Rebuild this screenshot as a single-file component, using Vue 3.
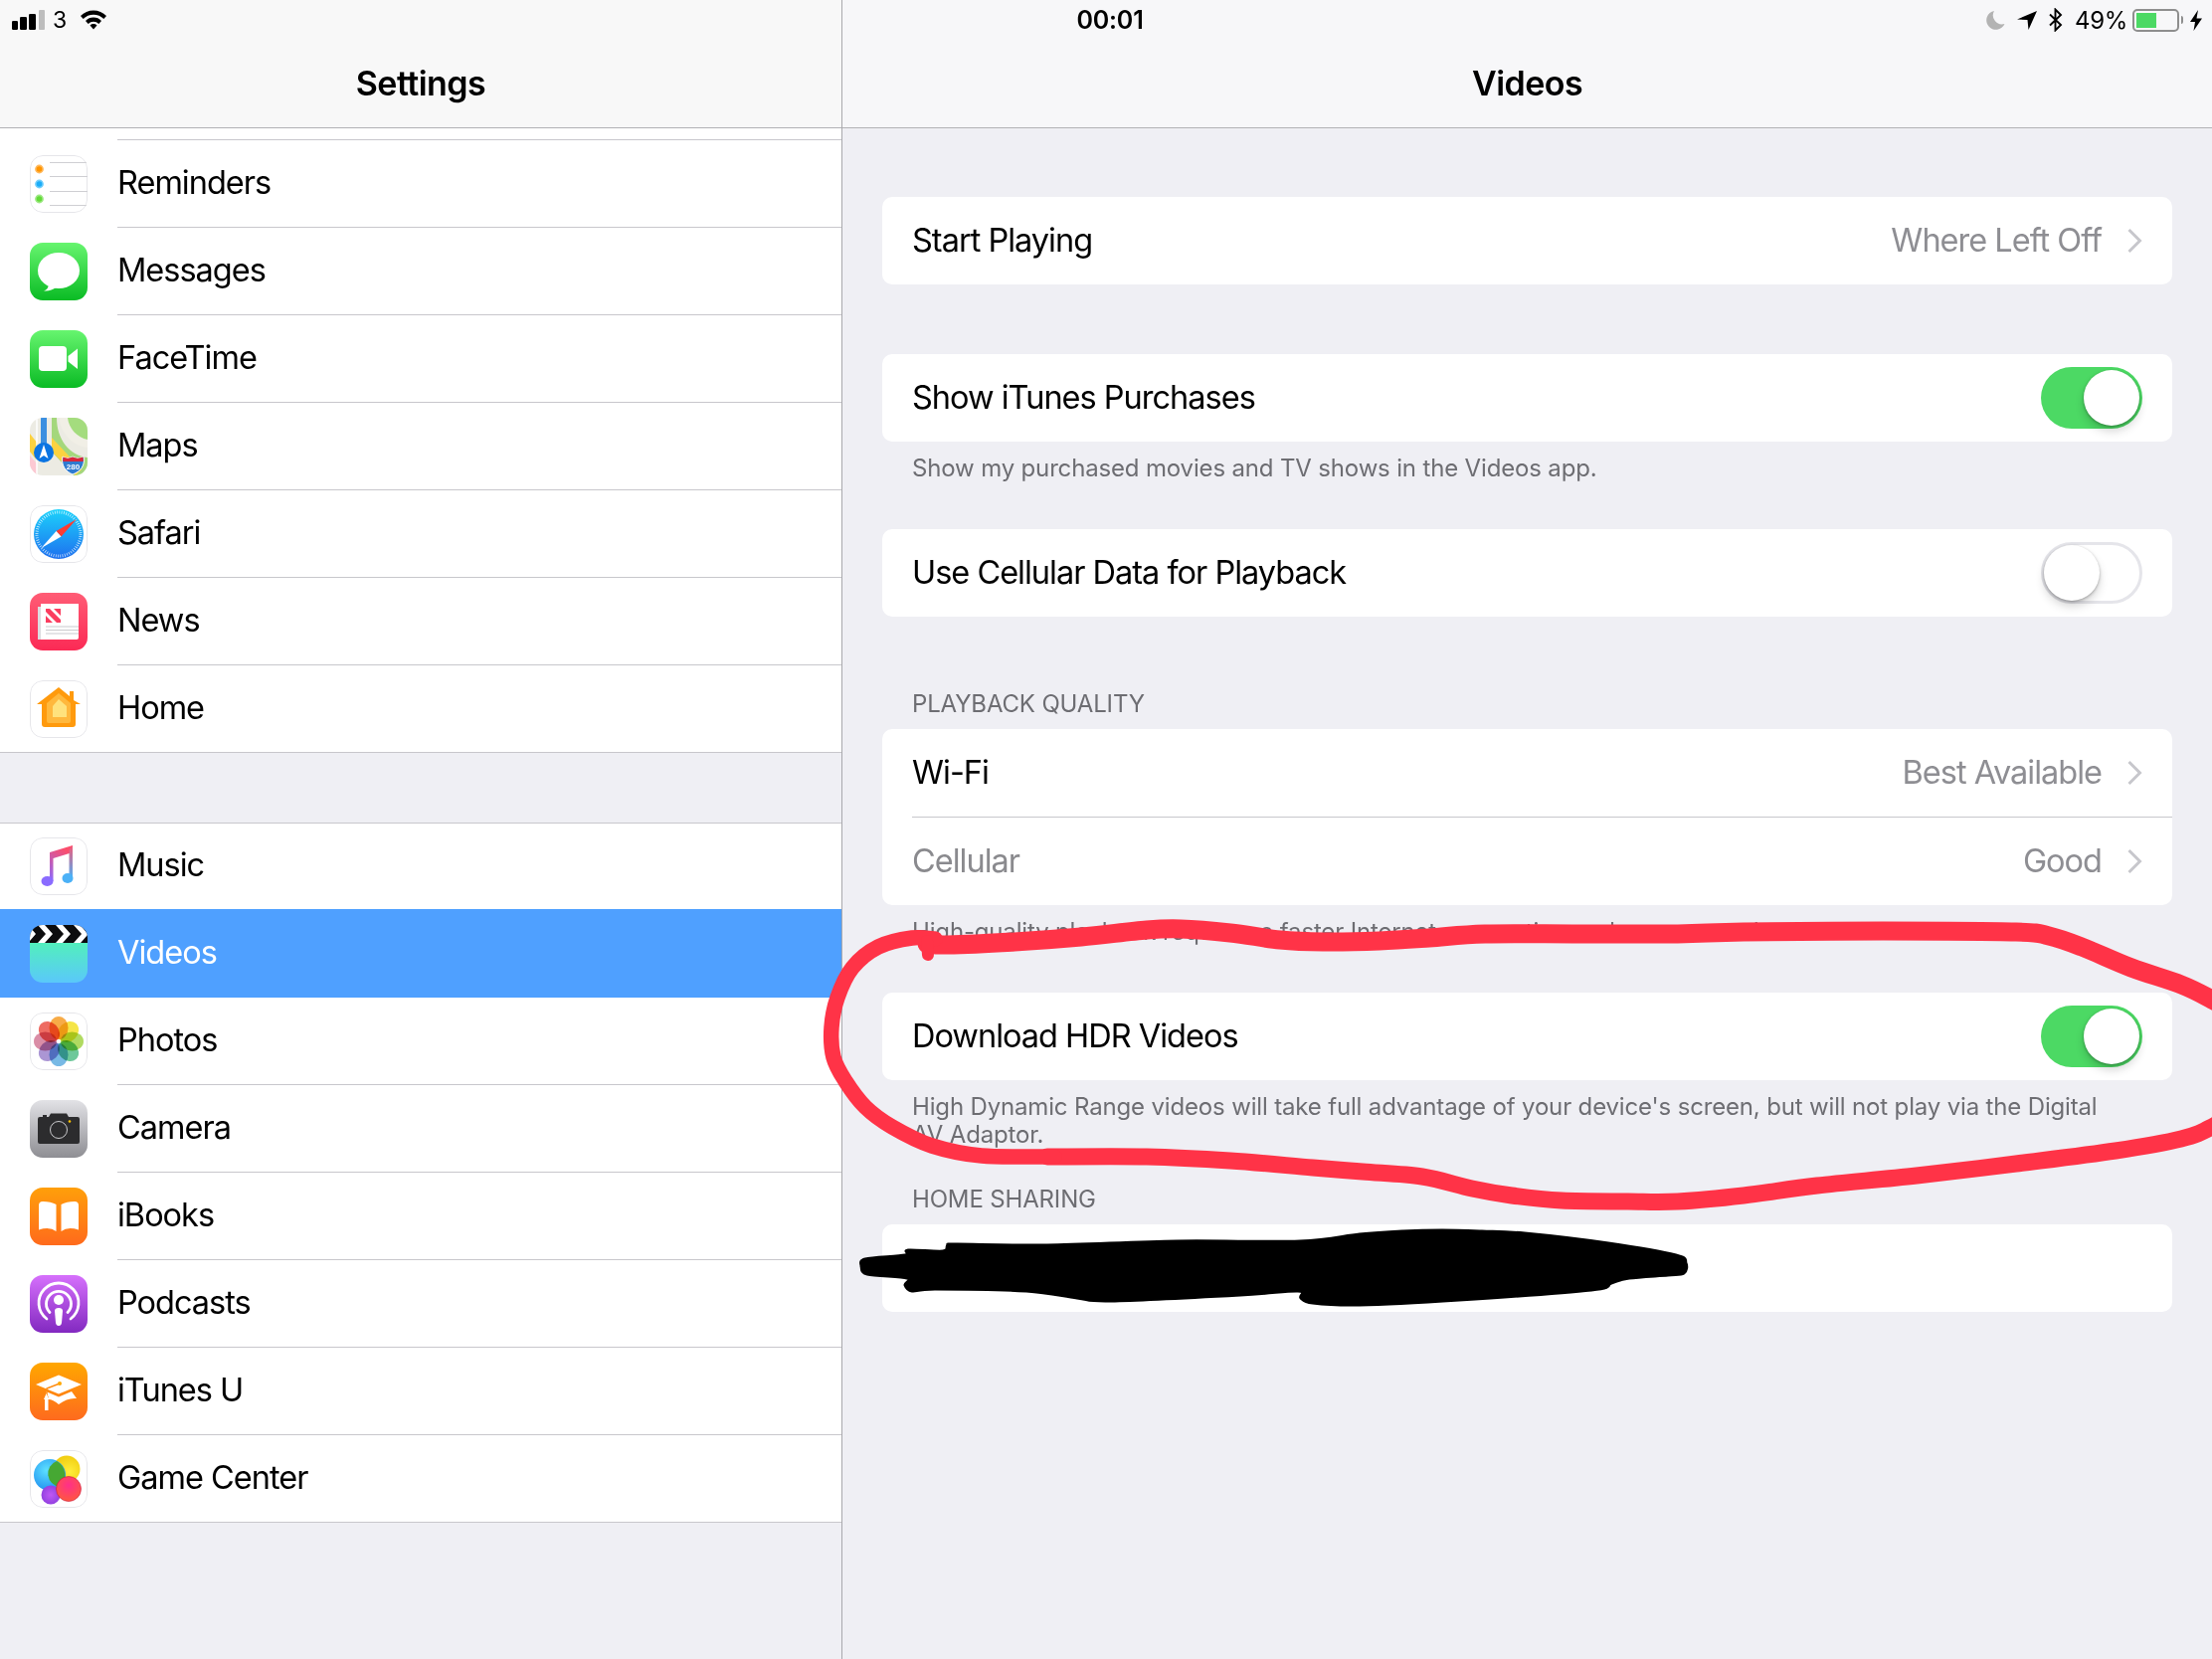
<script setup>
const groupOne = [
  { key: 'reminders', label: 'Reminders' },
  { key: 'messages', label: 'Messages' },
  { key: 'facetime', label: 'FaceTime' },
  { key: 'maps', label: 'Maps' },
  { key: 'safari', label: 'Safari' },
  { key: 'news', label: 'News' },
  { key: 'home', label: 'Home', last: true }
]
const groupTwo = [
  { key: 'music', label: 'Music', short: true },
  { key: 'videos', label: 'Videos', active: true },
  { key: 'photos', label: 'Photos' },
  { key: 'camera', label: 'Camera' },
  { key: 'ibooks', label: 'iBooks' },
  { key: 'podcasts', label: 'Podcasts' },
  { key: 'itunesu', label: 'iTunes U' },
  { key: 'gamecenter', label: 'Game Center', last: true }
]

const sections = [
  { gap: 'gap-first', rows: [{ label: 'Start Playing', value: 'Where Left Off' }] },
  {
    gap: 'gap-plain',
    rows: [{ label: 'Show iTunes Purchases', toggle: 'on' }],
    footer: 'Show my purchased movies and TV shows in the Videos app.'
  },
  { gap: 'gap-footer', rows: [{ label: 'Use Cellular Data for Playback', toggle: 'off' }] },
  {
    gap: 'gap-header',
    header: 'PLAYBACK QUALITY',
    rows: [
      { label: 'Wi-Fi', value: 'Best Available' },
      { label: 'Cellular', value: 'Good', muted: true }
    ],
    footer: 'High-quality playback requires a faster Internet connection and uses more data.'
  },
  {
    gap: 'gap-footer',
    rows: [{ label: 'Download HDR Videos', toggle: 'on' }],
    footer: "High Dynamic Range videos will take full advantage of your device's screen, but will not play via the Digital AV Adaptor."
  },
  { gap: 'gap-tight', header: 'HOME SHARING', rows: [{ label: '' }] }
]

function smooth(pts) {
  let d = `M${pts[0][0]} ${pts[0][1]}`
  for (let i = 0; i < pts.length - 1; i++) {
    const p0 = pts[i - 1] || pts[i]
    const p1 = pts[i]
    const p2 = pts[i + 1]
    const p3 = pts[i + 2] || p2
    const c1x = p1[0] + (p2[0] - p0[0]) / 6
    const c1y = p1[1] + (p2[1] - p0[1]) / 6
    const c2x = p2[0] - (p3[0] - p1[0]) / 6
    const c2y = p2[1] - (p3[1] - p1[1]) / 6
    d += ` C${c1x.toFixed(1)} ${c1y.toFixed(1)} ${c2x.toFixed(1)} ${c2y.toFixed(1)} ${p2[0]} ${p2[1]}`
  }
  return d
}

const redTop = smooth([
  [932, 949], [953, 950], [1020, 947], [1087, 942], [1153, 935], [1187, 934], [1237, 938], [1287, 945],
  [1330, 947], [1387, 946], [1437, 943], [1493, 939], [1587, 939], [1687, 939], [1753, 937], [1893, 936],
  [2027, 937], [2060, 941], [2093, 952], [2143, 973], [2193, 990], [2224, 1005], [2250, 1020]
])
const redBottom = smooth([
  [2250, 1115], [2224, 1133], [2193, 1145], [2127, 1157], [2027, 1170], [1927, 1182], [1827, 1192],
  [1753, 1202], [1687, 1208], [1637, 1208], [1570, 1207], [1520, 1202], [1480, 1195], [1430, 1183],
  [1370, 1178], [1320, 1174], [1237, 1167], [1153, 1163], [1053, 1163]
])
const redLeft = smooth([
  [1060, 1163], [987, 1162], [937, 1152], [897, 1133], [870, 1113], [850, 1087], [838, 1063], [836, 1033],
  [842, 1003], [857, 973], [883, 952], [917, 943], [940, 944]
])
const redHook = 'M933 960 L932 946'
const blobPts = [
  [866, 1273], [870, 1266], [910, 1262], [913, 1257], [948, 1258], [953, 1252], [963, 1251], [1053, 1252],
  [1183, 1248], [1307, 1248], [1367, 1241], [1410, 1238], [1450, 1237], [1490, 1238], [1533, 1240],
  [1617, 1250], [1685, 1262], [1695, 1270], [1693, 1280], [1677, 1282], [1638, 1285], [1620, 1290],
  [1600, 1297], [1467, 1307], [1367, 1312], [1320, 1310], [1308, 1305], [1305, 1298], [1247, 1302], [1117, 1308],
  [1083, 1305], [1032, 1298], [940, 1296], [917, 1298], [910, 1292], [912, 1285], [872, 1281], [866, 1273]
]
const blob = smooth(blobPts) + ' Z'

const petals = [
  { a: 0, c: '#f7a233' }, { a: 45, c: '#f4e233' }, { a: 90, c: '#a8d650' }, { a: 135, c: '#5dc28f' },
  { a: 180, c: '#68b1e2' }, { a: 225, c: '#a28bd0' }, { a: 270, c: '#d6819c' }, { a: 315, c: '#ec5c52' }
]
</script>

<template>
  <div class="screen">
    <aside class="master">
      <header class="nav nav-left"><h1 class="title">Settings</h1></header>
      <div class="list">
        <div class="top-rule"></div>
        <template v-for="(group, gi) in [groupOne, groupTwo]" :key="gi">
          <div v-if="gi === 1" class="list-gap"></div>
          <div
            v-for="row in group"
            :key="row.key"
            class="row"
            :class="{ 'row-last': row.last, 'row-active': row.active, 'row-short': row.short }"
          >
            <svg class="icon" viewBox="0 0 58 58">
              <template v-if="row.key === 'reminders'">
                <rect x=".5" y=".5" width="57" height="57" rx="12.5" fill="#fff" stroke="#e6e6ea" />
                <path d="M20 7.5H58M20 21.5H58M20 36.5H58M20 50.5H58" stroke="#cfcfd3" stroke-width="1.2" />
                <circle cx="9.5" cy="14" r="3.6" fill="#ff9500" stroke="#ffb95c" stroke-width="1.6" />
                <circle cx="9.5" cy="29" r="3.6" fill="#1badf8" stroke="#6fcdfb" stroke-width="1.6" />
                <circle cx="9.5" cy="44" r="3.6" fill="#63da38" stroke="#9de883" stroke-width="1.6" />
              </template>
              <template v-else-if="row.key === 'messages'">
                <defs><linearGradient id="gMsg" x1="0" y1="0" x2="0" y2="1"><stop offset="0" stop-color="#67f56f" /><stop offset="1" stop-color="#0abb24" /></linearGradient></defs>
                <rect width="58" height="58" fill="url(#gMsg)" />
                <ellipse cx="29" cy="28" rx="21" ry="18" fill="#fff" />
                <path d="M19 41 C19 45 17 47.500 14 48.500 C19 49 23 47.500 26 45 Z" fill="#fff" />
              </template>
              <template v-else-if="row.key === 'facetime'">
                <defs><linearGradient id="gFt" x1="0" y1="0" x2="0" y2="1"><stop offset="0" stop-color="#67f56f" /><stop offset="1" stop-color="#0abb24" /></linearGradient></defs>
                <rect width="58" height="58" fill="url(#gFt)" />
                <rect x="9" y="16" width="28" height="25" rx="4" fill="#fff" />
                <path d="M38.500 26 L48 18.500 V39 L38.500 31.500 Z" fill="#fff" />
              </template>
              <template v-else-if="row.key === 'maps'">
                <rect width="58" height="58" fill="#ecebe3" />
                <path d="M30 0 H58 V30 C46 30 30 16 30 0 Z" fill="#f1efe6" />
                <path d="M38 0 H58 V22 C48 20 39 11 38 0 Z" fill="#a4dc7e" />
                <path d="M22 0 H27 C27 22 40 38 58 40 V58 H44 L22 34 Z" fill="#a4d77c" />
                <path d="M22 20 L52 52 L46 58 L22 34 Z" fill="#fbd240" />
                <path d="M0 16 L8 26 V44 L0 34 Z" fill="#fbd240" />
                <path d="M0 38 L7 46 V58 H0 Z" fill="#fcc9d3" />
                <path d="M7 0 V58" stroke="#fff" stroke-width="1.500" />
                <path d="M14 0 V30" stroke="#3b8fe0" stroke-width="6" />
                <circle cx="14" cy="35" r="10" fill="#0a74e2" />
                <path d="M14 27 L18.500 41 L14 38 L9.500 41 Z" fill="#fff" />
                <path d="M33 39 C36 41 40 41 43 39 C46 41 50 41 54 39 C56 48 51 54 43 57 C36 54 31 48 33 39 Z" fill="#2f7bd0" stroke="#fff" stroke-width="1" />
                <path d="M33.500 39.500 C36 41 40 41 43 39.500 C46 41 50 41 53.500 39.500 L53.800 44 H33.200 Z" fill="#d9263a" />
                <text x="43.500" y="52" class="shield">280</text>
              </template>
              <template v-else-if="row.key === 'safari'">
                <defs><linearGradient id="gSaf" x1="0" y1="0" x2="0" y2="1"><stop offset="0" stop-color="#1cd2fb" /><stop offset="1" stop-color="#1e70ef" /></linearGradient></defs>
                <rect x=".5" y=".5" width="57" height="57" rx="12.500" fill="#fff" stroke="#e6e6ea" />
                <circle cx="29" cy="29" r="25" fill="url(#gSaf)" />
                <circle cx="29" cy="29" r="22" fill="none" stroke="#fff" stroke-opacity=".85" stroke-width="3" stroke-dasharray=".7 1.600" />
                <path d="M47 14 L26.500 26 L31.500 31.500 Z" fill="#ff3b30" />
                <path d="M11.500 43 L26.500 26 L31.500 31.500 Z" fill="#fff" />
              </template>
              <template v-else-if="row.key === 'news'">
                <defs><linearGradient id="gNews" x1="0" y1="0" x2="0" y2="1"><stop offset="0" stop-color="#ff5c75" /><stop offset="1" stop-color="#fb2a55" /></linearGradient></defs>
                <rect width="58" height="58" fill="url(#gNews)" />
                <rect x="8" y="14" width="4" height="33" fill="#dcdce0" />
                <path d="M11 11 H49 V45 Q49 47 47 47 H11 Z" fill="#fff" />
                <path d="M16 16 H20 L31 27 V30 H27 L16 19 Z M24 16 H31 V23 Z M16 23 L23 30 H16 Z" fill="#fb3d5f" />
                <path d="M16 34 H49 M16 37.500 H49 M16 41 H49" stroke="#c4c4c8" stroke-width=".9" />
              </template>
              <template v-else-if="row.key === 'home'">
                <rect x=".5" y=".5" width="57" height="57" rx="12.500" fill="#fff" stroke="#e6e6ea" />
                <path d="M29 7 L40 16 V11 H44 V20 L51 24 H46 V44 Q46 47 43 47 H15 Q12 47 12 44 V24 H7 Z" fill="#ff9a0d" />
                <path d="M29 13 L41 23 V41 Q41 43 39 43 H19 Q17 43 17 41 V23 Z" fill="#ffb83d" />
                <path d="M29 19 L37 26 V37 H23 V26 Z" fill="#ffe27d" />
              </template>
              <template v-else-if="row.key === 'music'">
                <defs>
                  <linearGradient id="gMusL" x1="0" y1="1" x2=".4" y2="0"><stop offset="0" stop-color="#8a6bff" /><stop offset="1" stop-color="#fb4d6c" /></linearGradient>
                  <linearGradient id="gMusR" x1="0" y1="0" x2="0" y2="1"><stop offset="0" stop-color="#f45a78" /><stop offset="1" stop-color="#4bb1f7" /></linearGradient>
                </defs>
                <rect x=".5" y=".5" width="57" height="57" rx="12.500" fill="#fff" stroke="#e6e6ea" />
                <path d="M20 15 L43 8 V15 L23.500 21 V44 H20 Z" fill="url(#gMusL)" />
                <path d="M39.500 13 L43 8 V41 H39.500 Z" fill="url(#gMusR)" />
                <ellipse cx="17.500" cy="44" rx="6" ry="5" fill="#8a6bff" />
                <ellipse cx="38" cy="41" rx="5.500" ry="5" fill="#4bb1f7" />
              </template>
              <template v-else-if="row.key === 'videos'">
                <defs><linearGradient id="gVid" x1="0" y1="0" x2="0" y2="1"><stop offset="0" stop-color="#52efbd" /><stop offset="1" stop-color="#5ac8fa" /></linearGradient></defs>
                <rect y="18" width="58" height="40" fill="url(#gVid)" />
                <rect width="58" height="18" fill="#0c0c0e" />
                <path d="M8 0 H15 L23 9 L15 18 H8 L16 9 Z M26 0 H33 L41 9 L33 18 H26 L34 9 Z M44 0 H51 L58 9 V10 L51 18 H44 L52 9 Z M0 2 L6 9 L0 16 Z" fill="#fff" />
              </template>
              <template v-else-if="row.key === 'photos'">
                <rect x=".5" y=".5" width="57" height="57" rx="12.500" fill="#fff" stroke="#e6e6ea" />
                <ellipse
                  v-for="p in petals"
                  :key="p.a"
                  class="petal"
                  cx="29"
                  cy="15.500"
                  rx="9.500"
                  ry="11.500"
                  :fill="p.c"
                  :transform="`rotate(${p.a} 29 29)`"
                />
              </template>
              <template v-else-if="row.key === 'camera'">
                <defs><linearGradient id="gCam" x1="0" y1="0" x2="0" y2="1"><stop offset="0" stop-color="#e2e2e6" /><stop offset="1" stop-color="#8e8e93" /></linearGradient></defs>
                <rect width="58" height="58" fill="url(#gCam)" />
                <path d="M10 17 H19 L21 13.500 H37 L39 17 H48 Q50 17 50 19 V42 Q50 44 48 44 H10 Q8 44 8 42 V19 Q8 17 10 17 Z" fill="#2c2c2e" />
                <rect x="13" y="15" width="4" height="2" fill="#2c2c2e" />
                <circle cx="29" cy="30" r="8.500" fill="none" stroke="#c9c9cc" stroke-width="1" />
                <circle cx="40" cy="21.500" r="1.300" fill="#ffc400" />
              </template>
              <template v-else-if="row.key === 'ibooks'">
                <defs><linearGradient id="gBook" x1="0" y1="0" x2="0" y2="1"><stop offset="0" stop-color="#ff9f0a" /><stop offset="1" stop-color="#ff6a1c" /></linearGradient></defs>
                <rect width="58" height="58" fill="url(#gBook)" />
                <path d="M9 18 Q9 14 13 14 Q21 14 26.500 17 V44 Q20 39 9 42.500 Z M49 18 Q49 14 45 14 Q37 14 31.500 17 V44 Q38 39 49 42.500 Z" fill="#fff" />
              </template>
              <template v-else-if="row.key === 'podcasts'">
                <defs><linearGradient id="gPod" x1="0" y1="0" x2="0" y2="1"><stop offset="0" stop-color="#d670fc" /><stop offset="1" stop-color="#8229c0" /></linearGradient></defs>
                <rect width="58" height="58" fill="url(#gPod)" />
                <path d="M17 44 A20 20 0 1 1 41 44" fill="none" stroke="#fff" stroke-width="2.800" stroke-linecap="round" />
                <path d="M20 37.500 A12.500 12.500 0 1 1 38 37.500" fill="none" stroke="#fff" stroke-width="2.800" stroke-linecap="round" />
                <circle cx="29" cy="25" r="5" fill="#fff" />
                <path d="M25 36 Q25 33 29 33 Q33 33 33 36 L32 48 Q31.500 51 29 51 Q26.500 51 26 48 Z" fill="#fff" />
              </template>
              <template v-else-if="row.key === 'itunesu'">
                <defs><linearGradient id="gItu" x1="0" y1="0" x2="0" y2="1"><stop offset="0" stop-color="#ffa700" /><stop offset="1" stop-color="#fe6a1e" /></linearGradient></defs>
                <rect width="58" height="58" fill="url(#gItu)" />
                <path d="M29 12.500 L52 22 L29 31.500 L6 22 Z" fill="#fff" />
                <path d="M16 29 L29 34.500 L42 29 L47 36 Q38 35 29 42 Q23 37 19 37 L18.500 34 Z" fill="#fff" />
                <path d="M30 21 L17 26 V33" fill="none" stroke="#fe8a10" stroke-width="1.400" />
                <circle cx="30" cy="21" r="2" fill="#ffa700" />
                <rect x="15" y="37" width="3.500" height="11" fill="#fff" />
                <path d="M16.500 31 L14 37 H19.500 Z" fill="#fff" />
              </template>
              <template v-else-if="row.key === 'gamecenter'">
                <defs>
                  <radialGradient id="gGcB" cx=".4" cy=".35" r=".7"><stop offset="0" stop-color="#5de0ff" /><stop offset="1" stop-color="#1e8df0" /></radialGradient>
                  <radialGradient id="gGcY" cx=".6" cy=".6" r=".7"><stop offset="0" stop-color="#ffee3c" /><stop offset="1" stop-color="#efc80a" /></radialGradient>
                  <radialGradient id="gGcP" cx=".5" cy=".35" r=".7"><stop offset="0" stop-color="#ff2f8a" /><stop offset="1" stop-color="#ff5a3a" /></radialGradient>
                  <radialGradient id="gGcV" cx=".5" cy=".5" r=".6"><stop offset="0" stop-color="#c058f5" /><stop offset="1" stop-color="#8a3cdc" /></radialGradient>
                </defs>
                <rect x=".5" y=".5" width="57" height="57" rx="12.500" fill="#fff" stroke="#e6e6ea" />
                <circle cx="37" cy="19" r="13.500" fill="url(#gGcY)" />
                <circle cx="20" cy="25" r="16" fill="url(#gGcB)" />
                <path d="M27 11 A16 16 0 0 1 30 37 A13.500 13.500 0 0 1 27 11 Z" fill="#46a833" />
                <circle cx="21" cy="45" r="9.500" fill="url(#gGcV)" />
                <circle cx="39" cy="39" r="12.500" fill="url(#gGcP)" stroke="#c8163e" stroke-width=".6" />
              </template>
            </svg>
            <div class="row-body"><span class="row-label">{{ row.label }}</span></div>
          </div>
        </template>
      </div>
    </aside>

    <main class="detail">
      <header class="nav nav-right"><h1 class="title">Videos</h1></header>
      <section v-for="(section, si) in sections" :key="si" class="section" :class="section.gap">
        <div v-if="section.header" class="caption-head">{{ section.header }}</div>
        <div class="group">
          <div v-for="(r, ri) in section.rows" :key="ri" class="cell">
            <span class="cell-label" :class="{ muted: r.muted }">{{ r.label }}</span>
            <template v-if="r.value">
              <span class="cell-value">{{ r.value }}</span>
              <svg class="chevron" viewBox="0 0 16 26"><path d="M2.500 2 L13.500 13 L2.500 24" fill="none" stroke="#c7c7cc" stroke-width="3" /></svg>
            </template>
            <div v-if="r.toggle" class="toggle" :class="`toggle-${r.toggle}`"><div class="knob"></div></div>
          </div>
        </div>
        <p v-if="section.footer" class="caption-foot">{{ section.footer }}</p>
      </section>
    </main>

    <div class="status">
      <div class="status-left">
        <svg class="signal" viewBox="0 0 34 20" width="34" height="20">
          <rect x="0" y="11" width="6" height="9" rx="1.200" fill="#000" />
          <rect x="8" y="7" width="7" height="13" rx="1.200" fill="#000" />
          <rect x="17" y="4" width="7" height="16" rx="1.200" fill="#000" />
          <rect x="27" y="0" width="6" height="20" rx="1" fill="#bdbdbd" />
        </svg>
        <span class="carrier">3</span>
        <svg class="wifi" viewBox="0 0 28 21" width="28" height="21">
          <path d="M1 7 A18 18 0 0 1 27 7 L24.300 10 A14.500 14.500 0 0 0 3.700 10 Z" fill="#000" />
          <path d="M6 12 A11 11 0 0 1 22 12 L19.300 15 A7.500 7.500 0 0 0 8.700 15 Z" fill="#000" />
          <path d="M10.500 16.500 A5 5 0 0 1 17.500 16.500 L14 20.500 Z" fill="#000" />
        </svg>
      </div>
      <div class="status-time">00:01</div>
      <div class="status-right">
        <svg viewBox="0 0 19 20" width="19" height="20"><path d="M8 1 A9.500 9.500 0 1 0 18.500 14 A9 9 0 0 1 8 1 Z" fill="#b3b3b3" /></svg>
        <svg class="s-loc" viewBox="0 0 20 20" width="20" height="20"><path d="M20 1 L0 9.500 L10.500 10 L11.500 20 Z" fill="#000" /></svg>
        <svg class="s-bt" viewBox="0 0 14 24" width="14" height="24"><path d="M1 6.500 L12 17 L6.500 22.500 V1.500 L12 7 L1 17.500" fill="none" stroke="#000" stroke-width="1.900" /></svg>
        <span class="percent">49%</span>
        <div class="battery"><div class="battery-fill"></div></div>
        <div class="battery-nub"></div>
        <svg class="s-bolt" viewBox="0 0 12 21" width="12" height="21"><path d="M8 0 L0 12 H5 L3.500 21 L12 8.500 H6.500 Z" fill="#000" /></svg>
      </div>
    </div>

    <svg class="ink" viewBox="0 0 2224 1668" width="2224" height="1668">
      <path :d="blob" fill="#000" stroke="#000" stroke-width="3" stroke-linejoin="round" />
      <path :d="redTop" class="red" stroke-width="19" />
      <path :d="redBottom" class="red" stroke-width="17" />
      <path :d="redLeft" class="red" stroke-width="15.500" />
      <path :d="redHook" class="red" stroke-width="12" />
    </svg>
  </div>
</template>

<style scoped>
.screen {
  position: relative;
  width: 2224px;
  height: 1668px;
  overflow: hidden;
  display: grid;
  grid-template-columns: 846px 1fr;
  background: #efeff4;
  font-family: Inter, "Liberation Sans", sans-serif;
  color: #000;
}
.master {
  border-right: 1px solid #a9a9ad;
  box-sizing: content-box;
  width: 846px;
  display: flex;
  flex-direction: column;
}
.detail {
  margin-left: 1px;
  display: flex;
  flex-direction: column;
}
.nav {
  height: 128px;
  flex: none;
  border-bottom: 1px solid #b2b2b5;
  display: flex;
  align-items: flex-end;
  justify-content: center;
}
.nav-left { background: #f8f8f8; }
.nav-right { background: #f7f7f9; }
.title {
  margin: 0 0 24px;
  font-size: 34px;
  line-height: 40px;
  font-weight: 600;
  letter-spacing: -0.55px;
}
.list { display: flex; flex-direction: column; }
.top-rule {
  height: 12px;
  background: #fff;
  box-sizing: border-box;
  padding-left: 118px;
  background-image: linear-gradient(#c8c7cc, #c8c7cc);
  background-repeat: no-repeat;
  background-size: calc(100% - 118px) 1px;
  background-position: 118px 11px;
}
.list-gap {
  height: 70px;
  background: #efeff4;
  border-bottom: 1px solid #c8c7cc;
}
.row {
  height: 88px;
  box-sizing: border-box;
  background: #fff;
  display: flex;
  align-items: center;
  padding-left: 30px;
}
.row-short { height: 86px; }
.row-active { height: 89px; background: #4fa0ff; color: #fff; }
.row-last { border-bottom: 1px solid #c8c7cc; }
.icon {
  width: 58px;
  height: 58px;
  flex: none;
  border-radius: 13px;
  overflow: hidden;
}
.row-body {
  flex: 1;
  align-self: stretch;
  margin-left: 30px;
  padding-bottom: 3px;
  display: flex;
  align-items: center;
  border-bottom: 1px solid #c8c7cc;
  box-sizing: border-box;
}
.row-last .row-body,
.row-short .row-body,
.row-active .row-body { border-bottom: 0; }
.row-label { font-size: 32.5px; letter-spacing: -1px; }
.shield {
  font-family: "Liberation Sans", sans-serif;
  font-size: 8px;
  font-weight: 700;
  fill: #fff;
  text-anchor: middle;
}
.petal { mix-blend-mode: multiply; opacity: .9; }

.section { display: flex; flex-direction: column; margin: 0 40px; }
.gap-first { margin-top: 69px; }
.gap-plain { margin-top: 70px; }
.gap-footer { margin-top: 47px; }
.gap-header { margin-top: 74px; }
.gap-tight { margin-top: 37px; }
.group {
  background: #fff;
  border-radius: 10px;
  overflow: hidden;
}
.cell {
  height: 88px;
  box-sizing: border-box;
  margin-left: 30px;
  padding-right: 30px;
  display: flex;
  align-items: center;
}
.cell + .cell { height: 89px; border-top: 1px solid #c8c7cc; }
.cell-label { flex: 1; font-size: 32.5px; letter-spacing: -1px; padding-bottom: 2px; }
.cell-label.muted { color: #8a8a8e; }
.cell-value { font-size: 32.5px; letter-spacing: -1px; color: #8e8e93; margin-right: 25px; padding-bottom: 2px; }
.chevron { width: 16px; height: 26px; flex: none; }
.caption-head,
.caption-foot {
  font-size: 24px;
  line-height: 28px;
  color: #6d6d72;
  padding: 0 30px;
  letter-spacing: -0.16px;
}
.caption-head { padding-bottom: 11px; }
.caption-foot { margin: 0; padding-top: 13px; padding-right: 48px; }
.toggle {
  width: 102px;
  height: 62px;
  box-sizing: border-box;
  border-radius: 31px;
  display: flex;
  align-items: center;
  padding: 3px;
}
.toggle-on { background: #4cd964; justify-content: flex-end; }
.toggle-off { border: 3px solid #e5e5ea; padding: 0; background: #fff; }
.knob {
  width: 56px;
  height: 56px;
  border-radius: 50%;
  background: #fff;
  box-shadow: 0 6px 10px rgba(0, 0, 0, .16), 0 1px 3px rgba(0, 0, 0, .3);
}

.status {
  position: absolute;
  left: 0;
  top: 0;
  width: 100%;
  height: 40px;
  box-sizing: border-box;
  padding: 0 10px 0 12px;
  display: grid;
  grid-template-columns: 1fr auto 1fr;
  align-items: center;
}
.status-left { display: flex; align-items: center; }
.carrier { font-size: 23px; margin-left: 7px; }
.wifi { margin-left: 13px; margin-top: -1px; }
.status-time { font-size: 25px; font-weight: 600; margin-left: 6px; letter-spacing: -0.2px; }
.status-right { display: flex; align-items: center; justify-content: flex-end; }
.s-loc { margin-left: 12px; }
.s-bt { margin-left: 12px; }
.percent { font-size: 24px; margin-left: 12px; letter-spacing: -0.3px; }
.battery {
  width: 47px;
  height: 23px;
  box-sizing: border-box;
  margin-left: 5px;
  border: 2px solid #8e8e8e;
  border-radius: 5px;
  padding: 2px;
  display: flex;
}
.battery-fill { width: 20px; background: #4cd964; }
.battery-nub { width: 2px; height: 8px; background: #8e8e8e; margin-left: 2px; border-radius: 0 2px 2px 0; }
.s-bolt { margin-left: 7px; }

.ink {
  position: absolute;
  left: 0;
  top: 0;
  pointer-events: none;
}
.red {
  fill: none;
  stroke: #ff3347;
  stroke-linecap: round;
  stroke-linejoin: round;
}
</style>
